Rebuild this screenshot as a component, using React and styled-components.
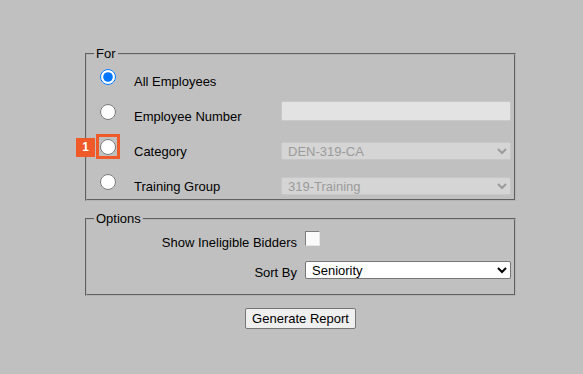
import React from "react";
import styled, { createGlobalStyle } from "styled-components";

const GlobalStyle = createGlobalStyle`
    body {
        margin: 0;
        background-color: #c0c0c0;
        font-family: "Liberation Sans", Arial, sans-serif;
        font-size: 13px;
        color: #000;
    }
`;

const Wrapper = styled.div`
    width: 431px;
    margin-left: 85px;
    padding-top: 46px;
    box-sizing: border-box;
`;

const Fieldset = styled.fieldset`
    margin: ${props => props.$top || 0}px 0 0 0;
    padding: ${props => props.$pad};
    border: 2px groove #b4b4b4;
    min-width: 0;
`;

const Legend = styled.legend`
    padding: 0 2px;
    font-size: 13px;
    line-height: 15px;
`;

const ForGrid = styled.div`
    display: grid;
    grid-template-columns: 34px 147px 230px;
    grid-auto-rows: 25px;
    row-gap: 10px;
    margin-left: 6px;
`;

const RadioCell = styled.div`
    position: relative;
    align-self: start;
    margin-top: 3px;
    width: 16px;
    height: 16px;
`;

const Radio = styled.input.attrs({ type: "radio", name: "scope" })`
    display: block;
    width: 16px;
    height: 16px;
    margin: 0;
    accent-color: #0075ff;
`;

const Highlight = styled.span`
    position: absolute;
    left: -4px;
    top: -5px;
    width: 24px;
    height: 25px;
    box-sizing: border-box;
    border: 3px solid #f05a28;
    pointer-events: none;
`;

const Badge = styled.span`
    position: absolute;
    left: -24px;
    top: -1px;
    width: 19px;
    height: 19px;
    background-color: #f05a28;
    color: #fff;
    font-weight: bold;
    font-size: 12px;
    line-height: 19px;
    text-align: center;
`;

const Label = styled.label`
    align-self: start;
    margin-top: ${props => props.$top || 0}px;
    line-height: 15px;
    white-space: nowrap;
    justify-self: ${props => (props.$right ? "end" : "start")};
`;

const TextField = styled.input`
    align-self: start;
    width: 230px;
    height: 20px;
    margin: 0;
    box-sizing: border-box;
    background-color: #e3e3e3;
    border: 1px solid #c9c9c9;
    border-radius: 2px;
`;

const Select = styled.select`
    align-self: start;
    margin: ${props => props.$top || 0}px 0 0 0;
    width: 100%;
    height: 18px;
    box-sizing: border-box;
    padding: 0 0 0 2px;
    font-family: "Liberation Sans", Arial, sans-serif;
    font-size: 13px;
    color: ${props => (props.disabled ? "#8c8c8c" : "#000")};
    background-color: ${props => (props.disabled ? "#dedede" : "#fff")};
    border: 1px solid ${props => (props.disabled ? "#cacaca" : "#767676")};
    border-radius: 2px;
`;

const OptionsGrid = styled.div`
    display: grid;
    grid-template-columns: 1fr 206px;
    grid-auto-rows: 19px;
    column-gap: 8px;
    row-gap: 11px;
`;

const Checkbox = styled.input.attrs({ type: "checkbox" })`
    appearance: none;
    align-self: start;
    width: 15px;
    height: 15px;
    margin: 0;
    box-sizing: border-box;
    background-color: #fafafa;
    border: 1px solid;
    border-color: #7d7d7d #e6e6e6 #e6e6e6 #7d7d7d;
`;

const Button = styled.button`
    display: block;
    margin: 12px auto 0;
    height: 21px;
    padding: 1px 6px;
    font-family: "Liberation Sans", Arial, sans-serif;
    font-size: 13px;
    color: #000;
    background-color: #efefef;
    border: 1px solid #767676;
    border-radius: 2px;
`;

const App = () => {
    return (
        <Wrapper>
            <GlobalStyle />
            <Fieldset $pad="5px 3px 3px 7px">
                <Legend>For</Legend>
                <ForGrid>
                    <RadioCell><Radio defaultChecked /></RadioCell>
                    <Label $top={8}>All Employees</Label>
                    <div></div>

                    <RadioCell><Radio /></RadioCell>
                    <Label $top={8}>Employee Number</Label>
                    <TextField type="text" disabled />

                    <RadioCell>
                        <Radio />
                        <Highlight />
                        <Badge>1</Badge>
                    </RadioCell>
                    <Label $top={8}>Category</Label>
                    <Select $top={6} disabled defaultValue="DEN-319-CA">
                        <option>DEN-319-CA</option>
                    </Select>

                    <RadioCell><Radio /></RadioCell>
                    <Label $top={8}>Training Group</Label>
                    <Select $top={6} disabled defaultValue="319-Training">
                        <option>319-Training</option>
                    </Select>
                </ForGrid>
            </Fieldset>

            <Fieldset $top={10} $pad="5px 3px 14px 7px">
                <Legend>Options</Legend>
                <OptionsGrid>
                    <Label $top={4} $right>Show Ineligible Bidders</Label>
                    <Checkbox />
                    <Label $top={4} $right>Sort By</Label>
                    <Select defaultValue="Seniority">
                        <option>Seniority</option>
                        <option>Name</option>
                        <option>Employee Number</option>
                    </Select>
                </OptionsGrid>
            </Fieldset>

            <Button>Generate Report</Button>
        </Wrapper>
    );
};

export default App;
